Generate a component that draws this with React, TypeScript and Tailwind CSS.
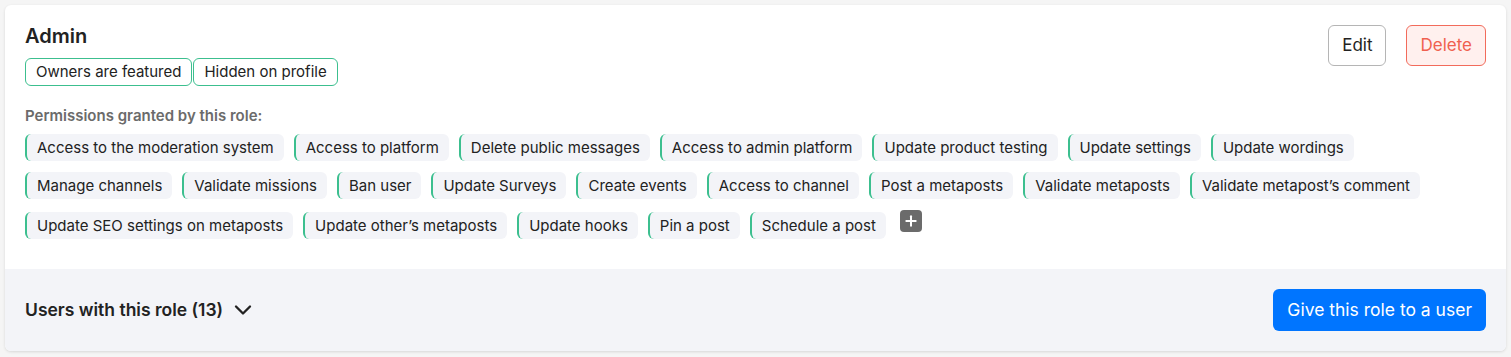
import { ChevronDown, Plus } from "lucide-react";

const permissions = [
  "Access to the moderation system",
  "Access to platform",
  "Delete public messages",
  "Access to admin platform",
  "Update product testing",
  "Update settings",
  "Update wordings",
  "Manage channels",
  "Validate missions",
  "Ban user",
  "Update Surveys",
  "Create events",
  "Access to channel",
  "Post a metaposts",
  "Validate metaposts",
  "Validate metapost’s comment",
  "Update SEO settings on metaposts",
  "Update other’s metaposts",
  "Update hooks",
  "Pin a post",
  "Schedule a post",
];

export default function App() {
  return (
    <main className="min-h-[357px] bg-[#f5f5f5] p-[5px] font-['Inter',sans-serif] text-[#222]">
      <div className="overflow-hidden rounded-md bg-white shadow-[0_1px_3px_rgba(0,0,0,0.12)]">
        {/* Role header */}
        <div className="px-5 pt-[17px] pb-[28px]">
          <div className="flex items-start justify-between">
            <div>
              <h2 className="text-[20px] leading-7 font-semibold">Admin</h2>
              <div className="mt-2 flex gap-px">
                <span className="rounded-md border border-[#3cbf8f] px-[10px] py-[3px] text-[15px] leading-5">
                  Owners are featured
                </span>
                <span className="rounded-md border border-[#3cbf8f] px-[10px] py-[3px] text-[15px] leading-5">
                  Hidden on profile
                </span>
              </div>
            </div>

            <div className="mt-[3px] flex gap-5">
              <button className="h-[41px] rounded-md border border-[#b5b5b5] bg-white px-[13px] text-[17px] text-[#222]">
                Edit
              </button>
              <button className="h-[41px] rounded-md border border-[#f26b5b] bg-[#fff0ee] px-[13px] text-[17px] text-[#f0604f]">
                Delete
              </button>
            </div>
          </div>

          <p className="mt-5 text-[15px] leading-5 font-semibold text-[#6b6b6b]">
            Permissions granted by this role:
          </p>
          <div className="mt-2 flex flex-wrap items-center gap-x-[10px] gap-y-[11px]">
            {permissions.map((p) => (
              <span
                key={p}
                className="flex h-[27px] items-center rounded-md border-l-2 border-[#3cbf8f] bg-[#f3f4f8] pr-[10px] pl-[10px] text-[15px] leading-5"
              >
                {p}
              </span>
            ))}
            <div className="flex h-[31px] items-start px-[4px]">
              <button className="flex h-[22px] w-[22px] items-center justify-center rounded-[4px] bg-[#6b6b6b] text-white">
                <Plus className="h-4 w-4" strokeWidth={3} />
              </button>
            </div>
          </div>
        </div>

        {/* Users footer */}
        <div className="flex h-[82px] items-center justify-between bg-[#f3f4f8] px-5">
          <button className="flex items-center gap-[6px] text-[17.5px] font-semibold text-[#222]">
            Users with this role (13)
            <ChevronDown size={28} strokeWidth={2} />
          </button>
          <button className="h-[42px] rounded-md bg-[#0075ff] px-[14px] text-[17.5px] text-white">
            Give this role to a user
          </button>
        </div>
      </div>
    </main>
  );
}
